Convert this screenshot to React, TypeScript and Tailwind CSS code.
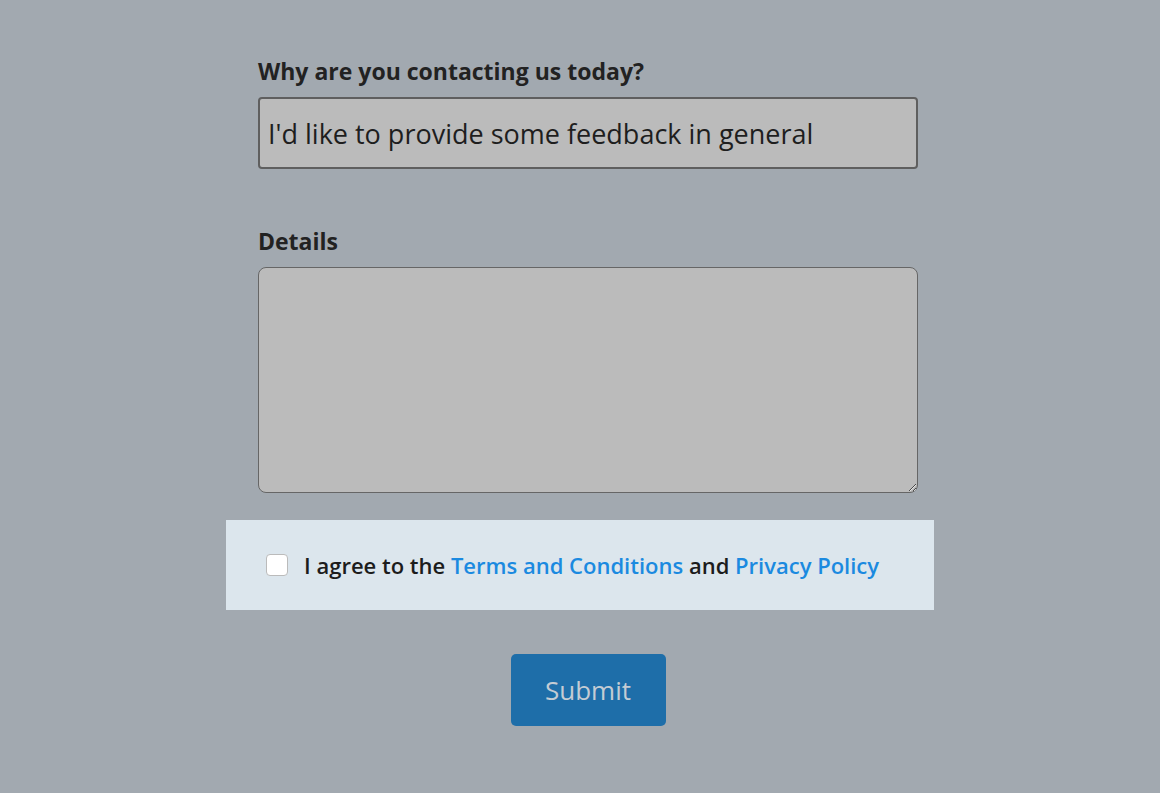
export default function App() {
  return (
    <div className="min-h-[793px] bg-[#a2a9b0] font-['Open_Sans',sans-serif] text-[#222]">
      <div className="mx-auto w-[708px] pt-[56px]">
        <form className="flex flex-col" onSubmit={(e) => e.preventDefault()}>
          <div className="pl-8 pr-4">
            <label className="block text-[23px] font-bold leading-[30px] text-[#222]">
              Why are you contacting us today?
            </label>
            <input
              type="text"
              defaultValue="I'd like to provide some feedback in general"
              className="mt-[11px] block h-[72px] w-full rounded-[4px] border-2 border-[#5f5f5f] bg-[#bbbbbb] px-[8px] text-[27px] text-[#1e1e1e] outline-none"
            />
          </div>

          <div className="mt-[57px] pl-8 pr-4">
            <label className="block text-[23px] font-bold leading-[30px] text-[#222]">
              Details
            </label>
            <textarea className="mt-[11px] block h-[226px] w-full rounded-[8px] border border-[#666] bg-[#bbbbbb] outline-none" />
          </div>

          <div className="mt-[27px] flex h-[90px] items-center bg-[#dce6ed] pl-[40px]">
            <input
              type="checkbox"
              className="h-[22px] w-[22px] appearance-none rounded-[4px] border border-[#bbb] bg-white"
            />
            <span className="ml-[16px] text-[22px] font-semibold text-[#1c1c1c]">
              I agree to the{" "}
              <a href="#" className="text-[#1b8ae0]">
                Terms and Conditions
              </a>{" "}
              and{" "}
              <a href="#" className="text-[#1b8ae0]">
                Privacy Policy
              </a>
            </span>
          </div>

          <div className="mt-[44px] flex justify-center pl-8 pr-4">
            <button
              type="submit"
              className="h-[72px] w-[155px] rounded-[5px] bg-[#1e6ea9] text-[26px] text-[#c4ccd4]"
            >
              Submit
            </button>
          </div>
        </form>
      </div>
    </div>
  );
}
